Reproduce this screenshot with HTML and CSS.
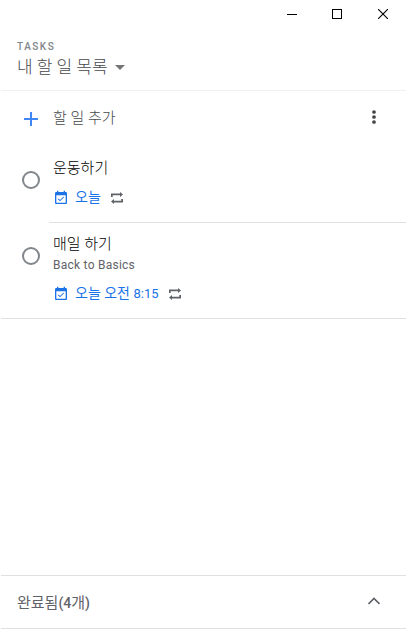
FILE: index.html
```html
<!DOCTYPE html>
<html lang="ko">
<head>
    <meta charset="UTF-8">
    <meta name="viewport" content="width=device-width, initial-scale=1.0">
    <title>Tasks</title>
    <link rel="stylesheet" href="styles.css">
</head>
<body>
    <div class="window">
        <div class="titlebar">
            <button type="button" aria-label="Minimize">
                <svg width="10" height="10" viewBox="0 0 10 10" shape-rendering="crispEdges"><path d="M0 5h10v1H0z"/></svg>
            </button>
            <button type="button" aria-label="Maximize">
                <svg width="10" height="10" viewBox="0 0 10 10" shape-rendering="crispEdges"><path d="M.5.5h9v9h-9z" fill="none" stroke="#000"/></svg>
            </button>
            <button type="button" aria-label="Close">
                <svg width="10" height="10" viewBox="0 0 10 10"><path d="M0 0l10 10M10 0L0 10" fill="none" stroke="#000" stroke-width="1.1"/></svg>
            </button>
        </div>

        <header class="header">
            <div class="app-name">TASKS</div>
            <div class="list-select">
                <h1>내 할 일 목록</h1>
                <svg width="10" height="5" viewBox="0 0 10 5"><path d="M0 0h10L5 5z"/></svg>
            </div>
        </header>

        <div class="add-row">
            <svg class="plus" width="14" height="14" viewBox="0 0 14 14"><path d="M6 0h2v6h6v2H8v6H6V8H0V6h6z"/></svg>
            <span class="add-label">할 일 추가</span>
            <svg class="more" width="4" height="14" viewBox="0 0 4 14"><circle cx="2" cy="2" r="1.85"/><circle cx="2" cy="7" r="1.85"/><circle cx="2" cy="12" r="1.85"/></svg>
        </div>

        <ul class="tasks">
            <li class="task">
                <span class="check"></span>
                <div class="task-body">
                    <div class="task-title">운동하기</div>
                    <div class="task-date">
                        <svg class="event" width="16" height="16" viewBox="0 0 24 24"><path d="M16.53 11.06L15.47 10l-4.88 4.88-2.12-2.12-1.06 1.06L10.59 17l5.94-5.94zM19 3h-1V1h-2v2H8V1H6v2H5c-1.11 0-1.99.9-1.99 2L3 19c0 1.1.89 2 2 2h14c1.1 0 2-.9 2-2V5c0-1.1-.9-2-2-2zm0 16H5V8h14v11z"/></svg>
                        <span class="date-text">오늘</span>
                        <svg class="repeat" width="12" height="12" viewBox="0 0 12 12"><path d="M0 1.5h9V0l3 2.5L9 5V3.2H1.7V5H0zM12 10.5H3V12L0 9.5 3 7v1.8h7.3V7H12z"/></svg>
                    </div>
                </div>
            </li>
            <li class="task">
                <span class="check"></span>
                <div class="task-body">
                    <div class="task-title">매일 하기</div>
                    <div class="task-note">Back to Basics</div>
                    <div class="task-date">
                        <svg class="event" width="16" height="16" viewBox="0 0 24 24"><path d="M16.53 11.06L15.47 10l-4.88 4.88-2.12-2.12-1.06 1.06L10.59 17l5.94-5.94zM19 3h-1V1h-2v2H8V1H6v2H5c-1.11 0-1.99.9-1.99 2L3 19c0 1.1.89 2 2 2h14c1.1 0 2-.9 2-2V5c0-1.1-.9-2-2-2zm0 16H5V8h14v11z"/></svg>
                        <span class="date-text">오늘 오전 <span class="time">8:15</span></span>
                        <svg class="repeat" width="12" height="12" viewBox="0 0 12 12"><path d="M0 1.5h9V0l3 2.5L9 5V3.2H1.7V5H0zM12 10.5H3V12L0 9.5 3 7v1.8h7.3V7H12z"/></svg>
                    </div>
                </div>
            </li>
        </ul>

        <footer class="completed">
            <span class="completed-label">완료됨<b>(4</b>개<b>)</b></span>
            <svg width="12" height="8" viewBox="0 0 12 8"><path d="M.5 7L6 1.5 11.5 7" fill="none" stroke="#5f6368" stroke-width="1.7"/></svg>
        </footer>
    </div>
</body>
</html>
```
FILE: styles.css
```css
* {
    margin: 0;
    padding: 0;
    box-sizing: border-box;
}

body {
    background: #fff;
    font-family: Roboto, "Noto Sans CJK KR", sans-serif;
    color: #202124;
}

svg {
    display: block;
    flex: none;
}

.window {
    display: flex;
    flex-direction: column;
    height: 630px;
    padding: 0 1px;
}

.titlebar {
    display: flex;
    justify-content: flex-end;
    height: 28px;
}

.titlebar button {
    display: flex;
    align-items: center;
    justify-content: center;
    width: 46px;
    background: none;
    border: none;
}

.titlebar button:first-child {
    width: 44px;
}

.header {
    height: 63px;
    padding: 13px 16px 0;
    border-bottom: 1px solid #f1f1f1;
}

.app-name {
    font-size: 10px;
    font-weight: 500;
    line-height: 12px;
    letter-spacing: 1.5px;
    color: #80868b;
}

.list-select {
    display: flex;
    align-items: center;
    gap: 7px;
    height: 26px;
}

.list-select h1 {
    padding-top: 1px;
    font-size: 17px;
    font-weight: 300;
    line-height: 26px;
    color: #45494d;
}

.list-select svg {
    margin-top: 3px;
    fill: #757575;
}

.add-row {
    display: flex;
    align-items: center;
    height: 54px;
    padding: 0 30px 2px 23px;
}

.plus {
    margin-top: 4px;
    fill: #4285f4;
}

.add-label {
    flex: 1;
    margin: 2px 0 0 15px;
    font-size: 15px;
    font-weight: 300;
    line-height: 20px;
    color: #45494d;
}

.more {
    fill: #444;
}

.tasks {
    flex: 1;
    padding-top: 2px;
    list-style: none;
}

.task {
    display: flex;
    padding-left: 21px;
}

.check {
    flex: none;
    width: 18px;
    height: 18px;
    margin-top: 24px;
    border: 2px solid #80868b;
    border-radius: 50%;
}

.task-body {
    flex: 1;
    margin-left: 9px;
    padding: 11px 0 16px 4px;
    border-bottom: 1px solid #e0e0e0;
}

.task:last-child {
    border-bottom: 1px solid #e0e0e0;
}

.task:last-child .task-body {
    border-bottom: none;
}

.task-title {
    font-size: 15px;
    font-weight: 300;
    line-height: 20px;
    color: #000;
}

.task-note {
    font-size: 12px;
    line-height: 17px;
    margin-top: 3px;
    letter-spacing: 0.25px;
    color: #5f6368;
}

.task-date {
    display: flex;
    align-items: center;
    height: 16px;
    margin-top: 12px;
    font-size: 14px;
    line-height: 16px;
    color: #1a73e8;
}

.event {
    fill: #1a73e8;
}

.date-text {
    margin: 0 10px 2px 6px;
}

.time {
    font-size: 13px;
}

.repeat {
    fill: #5f6368;
}

.completed {
    display: flex;
    align-items: center;
    justify-content: space-between;
    height: 54px;
    margin-bottom: 1px;
    padding: 0 26px 0 16px;
    border-top: 1px solid #e0e0e0;
    border-bottom: 1px solid #e0e0e0;
    font-size: 15px;
    line-height: 20px;
    color: #5f6368;
}

.completed-label {
    margin-top: 2px;
}

.completed b {
    font-size: 14px;
    font-weight: 500;
}

.completed svg {
    margin-bottom: 2px;
}
```
